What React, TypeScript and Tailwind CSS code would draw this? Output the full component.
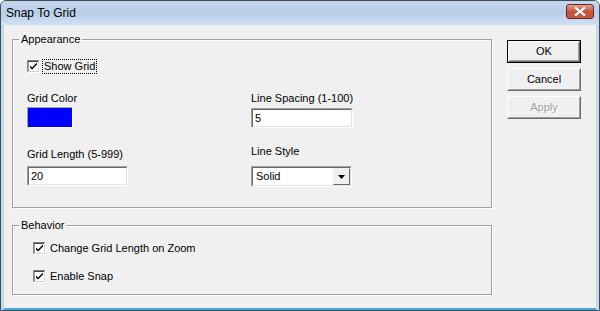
import React from 'react'

const font = { fontFamily: '"Liberation Sans", Arial, sans-serif' }

function CheckBox({ checked = true }: { checked?: boolean }) {
  return (
    <svg width="13" height="13" viewBox="0 0 13 13" className="shrink-0">
      <rect x="0" y="0" width="13" height="13" fill="#ffffff" />
      <path d="M0 12.5V0.5H12.5" stroke="#808080" fill="none" />
      <path d="M1 11.5V1.5H11.5" stroke="#404040" fill="none" />
      <path d="M0.5 12.5H12.5V0" stroke="#ffffff" fill="none" />
      <path d="M1.5 11.5H11.5V1" stroke="#d4d0c8" fill="none" />
      {checked && (
        <path d="M3 5.5L5 7.5L10 2.5V4.5L5 9.5L3 7.5Z" fill="#000000" />
      )}
    </svg>
  )
}

function TextInput({ value, width }: { value: string; width: string }) {
  return (
    <div
      className={`${width} h-[20px] bg-white border border-t-[#a0a0a0] border-l-[#a0a0a0] border-b-white border-r-white flex items-center`}
    >
      <div className="w-full h-full border border-t-[#696969] border-l-[#696969] border-b-[#e3e3e3] border-r-[#e3e3e3] flex items-center pl-[2px] text-[11px] text-black">
        {value}
      </div>
    </div>
  )
}

function Button({ label, isDefault, disabled }: { label: string; isDefault?: boolean; disabled?: boolean }) {
  return (
    <div className={`w-[74px] h-[23px] ${isDefault ? 'border border-black' : ''}`}>
      <div className="w-full h-full border border-t-white border-l-white border-b-[#696969] border-r-[#696969] bg-[#f0f0f0]">
        <div
          className={`w-full h-full border border-transparent border-b-[#a0a0a0] border-r-[#a0a0a0] flex items-center justify-center text-[11px] ${
            disabled ? 'text-[#a0a0a0] [text-shadow:1px_1px_0_#ffffff]' : 'text-black'
          }`}
        >
          {label}
        </div>
      </div>
    </div>
  )
}

function Group({ title, className, children }: { title: string; className: string; children: React.ReactNode }) {
  return (
    <fieldset
      className={`${className} border border-[#a0a0a0] shadow-[1px_1px_0_#ffffff,inset_1px_1px_0_#ffffff] rounded-none m-0 px-0`}
    >
      <legend className="ml-[6px] px-[2px] text-[11px] leading-[13px] text-black">{title}</legend>
      {children}
    </fieldset>
  )
}

export default function App() {
  return (
    <div className="w-[600px] h-[311px] flex flex-col overflow-hidden rounded-t-[6px] border border-[#434b55] bg-[#c4d8ee]" style={font}>
      {/* Title bar */}
      <div className="h-[24px] shrink-0 flex items-center justify-between pl-[5px] pr-[5px] bg-gradient-to-b from-[#c4d7ee] via-[#b9cfe8] to-[#cfe0f3]">
        <span className="text-[12px] text-black">Snap To Grid</span>
        <div className="w-[28px] h-[15px] -mt-[4px] rounded-[3px] border border-[#5d2a24] bg-gradient-to-b from-[#e8a393] via-[#c9503a] to-[#c25a44] flex items-center justify-center">
          <svg width="12" height="9" viewBox="0 0 12 9">
            <path d="M1 0.5L6 4.5L11 0.5M1 8.5L6 4.5L11 8.5" stroke="#ffffff" strokeWidth="2.2" fill="none" />
          </svg>
        </div>
      </div>

      {/* Body */}
      <div className="flex-1 mx-[3px] border-b-2 border-[#3aaed6] bg-[#f0f0f0] flex pl-[8px] pt-[8px]">
        <div className="w-[480px] flex flex-col gap-[11px]">
          <Group title="Appearance" className="h-[175px]">
            <div className="flex flex-col pl-[14px] pt-[14px]">
              <div className="flex items-center gap-[3px]">
                <CheckBox />
                <span className="text-[11px] text-black outline-1 outline-dotted outline-black px-[1px] leading-[13px]">Show Grid</span>
              </div>
              <div className="flex mt-[19px]">
                <div className="w-[224px] flex flex-col">
                  <span className="text-[11px] text-black leading-[13px]">Grid Color</span>
                  <div className="mt-[2px] w-[46px] h-[21px] bg-[#0000ff] border border-t-[#a0a0a0] border-l-[#a0a0a0] border-b-white border-r-white" />
                  <span className="mt-[20px] text-[11px] text-black leading-[13px]">Grid Length (5-999)</span>
                  <div className="mt-[5px]">
                    <TextInput value="20" width="w-[101px]" />
                  </div>
                </div>
                <div className="flex flex-col">
                  <span className="text-[11px] text-black leading-[13px]">Line Spacing (1-100)</span>
                  <div className="mt-[3px]">
                    <TextInput value="5" width="w-[102px]" />
                  </div>
                  <span className="mt-[17px] text-[11px] text-black leading-[13px]">Line Style</span>
                  <div className="mt-[8px] w-[101px] h-[21px] bg-white border border-t-[#a0a0a0] border-l-[#a0a0a0] border-b-white border-r-white">
                    <div className="w-full h-full border border-t-[#696969] border-l-[#696969] border-b-[#e3e3e3] border-r-[#e3e3e3] flex items-center justify-between">
                      <span className="pl-[3px] text-[11px] text-black">Solid</span>
                      <div className="w-[17px] h-[17px] bg-[#f0f0f0] border border-t-[#f0f0f0] border-l-[#f0f0f0] border-b-[#696969] border-r-[#696969] flex items-center justify-center">
                        <svg width="7" height="4" viewBox="0 0 7 4">
                          <path d="M0 0H7L3.5 4Z" fill="#000000" />
                        </svg>
                      </div>
                    </div>
                  </div>
                </div>
              </div>
            </div>
          </Group>
          <Group title="Behavior" className="h-[76px]">
            <div className="flex flex-col pl-[20px] pt-[10px] gap-[15px]">
              <div className="flex items-center gap-[4px]">
                <CheckBox />
                <span className="text-[11px] text-black leading-[13px]">Change Grid Length on Zoom</span>
              </div>
              <div className="flex items-center gap-[4px]">
                <CheckBox />
                <span className="text-[11px] text-black leading-[13px]">Enable Snap</span>
              </div>
            </div>
          </Group>
        </div>
        <div className="ml-[15px] pt-[7px] flex flex-col gap-[5px]">
          <Button label="OK" isDefault />
          <Button label="Cancel" />
          <Button label="Apply" disabled />
        </div>
      </div>
    </div>
  )
}
